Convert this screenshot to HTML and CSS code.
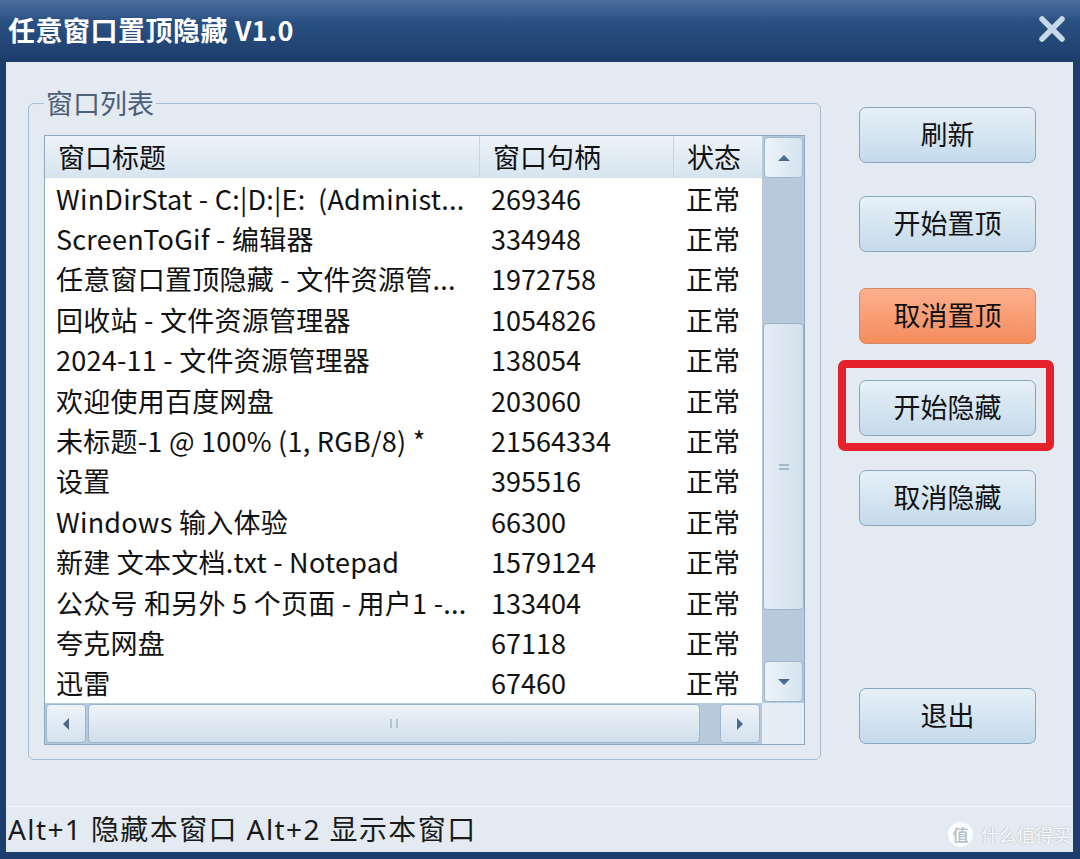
FILE: index.html
```html
<!DOCTYPE html>
<html lang="zh-CN">
<head>
    <meta charset="UTF-8">
    <title>任意窗口置顶隐藏 V1.0</title>
    <link rel="stylesheet" href="styles.css">
</head>
<body>
    <div class="window">
        <div class="titlebar">
            <span class="title">任意窗口置顶隐藏 V1.0</span>
            <svg class="close" width="26" height="26" viewBox="0 0 26 26">
                <path d="M3 3 L23 23 M23 3 L3 23" stroke="#c6d7e8" stroke-width="5.5" stroke-linecap="round"/>
            </svg>
        </div>

        <div class="client">
            <fieldset class="group">
                <legend>窗口列表</legend>
                <div class="listview">
                    <div class="lv-main">
                        <div class="lv-content">
                            <div class="lv-header">
                                <div class="c1">窗口标题</div>
                                <div class="c2">窗口句柄</div>
                                <div class="c3">状态</div>
                            </div>
                            <div class="lv-rows">
                                <div class="row"><span class="c1">WinDirStat - C:|D:|E:&nbsp; (Administ...</span><span class="c2">269346</span><span class="c3">正常</span></div>
                                <div class="row"><span class="c1">ScreenToGif - 编辑器</span><span class="c2">334948</span><span class="c3">正常</span></div>
                                <div class="row"><span class="c1">任意窗口置顶隐藏 - 文件资源管...</span><span class="c2">1972758</span><span class="c3">正常</span></div>
                                <div class="row"><span class="c1">回收站 - 文件资源管理器</span><span class="c2">1054826</span><span class="c3">正常</span></div>
                                <div class="row"><span class="c1">2024-11 - 文件资源管理器</span><span class="c2">138054</span><span class="c3">正常</span></div>
                                <div class="row"><span class="c1">欢迎使用百度网盘</span><span class="c2">203060</span><span class="c3">正常</span></div>
                                <div class="row"><span class="c1">未标题-1 @ 100% (1, RGB/8) *</span><span class="c2">21564334</span><span class="c3">正常</span></div>
                                <div class="row"><span class="c1">设置</span><span class="c2">395516</span><span class="c3">正常</span></div>
                                <div class="row"><span class="c1">Windows 输入体验</span><span class="c2">66300</span><span class="c3">正常</span></div>
                                <div class="row"><span class="c1">新建 文本文档.txt - Notepad</span><span class="c2">1579124</span><span class="c3">正常</span></div>
                                <div class="row"><span class="c1">公众号 和另外 5 个页面 - 用户1 -...</span><span class="c2">133404</span><span class="c3">正常</span></div>
                                <div class="row"><span class="c1">夸克网盘</span><span class="c2">67118</span><span class="c3">正常</span></div>
                                <div class="row"><span class="c1">迅雷</span><span class="c2">67460</span><span class="c3">正常</span></div>
                            </div>
                        </div>

                        <!-- vertical scrollbar -->
                        <div class="vscroll">
                            <div class="sb-btn">
                                <svg width="14" height="8" viewBox="0 0 14 8"><path d="M1 7 L7 1 L13 7 Z" fill="#4b6a8c"/></svg>
                            </div>
                            <div class="vtrack">
                                <div class="vthumb"><span class="grip-h"></span></div>
                            </div>
                            <div class="sb-btn">
                                <svg width="14" height="8" viewBox="0 0 14 8"><path d="M1 1 L13 1 L7 7 Z" fill="#4b6a8c"/></svg>
                            </div>
                        </div>
                    </div>

                    <div class="lv-bottom">
                        <div class="hscroll">
                            <div class="sb-btn hbtn">
                                <svg width="8" height="14" viewBox="0 0 8 14"><path d="M7 1 L7 13 L1 7 Z" fill="#4b6a8c"/></svg>
                            </div>
                            <div class="hthumb"><span class="grip-v"></span></div>
                            <div class="htrack"></div>
                            <div class="sb-btn hbtn">
                                <svg width="8" height="14" viewBox="0 0 8 14"><path d="M1 1 L7 7 L1 13 Z" fill="#4b6a8c"/></svg>
                            </div>
                        </div>
                        <div class="corner"></div>
                    </div>
                </div>
            </fieldset>

            <div class="buttons">
                <button class="btn">刷新</button>
                <button class="btn gap-a">开始置顶</button>
                <button class="btn orange gap-b">取消置顶</button>
                <button class="btn marked gap-b">开始隐藏</button>
                <button class="btn gap-c">取消隐藏</button>
                <button class="btn exit">退出</button>
            </div>
        </div>

        <div class="statusbar">Alt+1 隐藏本窗口 Alt+2 显示本窗口</div>

        <div class="watermark">
            <span class="wm-logo">值</span>
            <span class="wm-text">什么值得买</span>
        </div>
    </div>
</body>
</html>
```

FILE: styles.css
```css
/* Base */
* {
    margin: 0;
    padding: 0;
    box-sizing: border-box;
}

body {
    width: 1080px;
    height: 859px;
    overflow: hidden;
    font-family: "Noto Sans CJK SC", "Noto Sans", sans-serif;
    color: #111;
}

/* Window frame */
.window {
    position: relative;
    width: 1080px;
    height: 859px;
    display: flex;
    flex-direction: column;
    background-color: #1d3e6c;
    padding: 0 7px 7px 6px;
}

.titlebar {
    height: 62px;
    margin: 0 -7px 0 -6px;
    padding: 0 15px 0 8px;
    display: flex;
    align-items: center;
    justify-content: space-between;
    background: linear-gradient(#4b6e9d 0%, #2a5082 35%, #1c3d6b 100%);
}

.title {
    color: #fff;
    font-size: 27px;
    font-weight: bold;
    letter-spacing: 0.5px;
    margin-top: -4px;
}

.close {
    margin-top: -4px;
}

/* Client area */
.client {
    flex: 1;
    display: flex;
    padding: 23px 0 0 22px;
    background-color: #e3eaf1;
}

/* Group box */
.group {
    width: 793px;
    height: 675px;
    border: 1px solid #a8bdd1;
    border-radius: 6px;
    padding: 14px 14px 14px 15px;
    min-width: 0;
}

.group legend {
    font-size: 27px;
    line-height: 36px;
    padding: 0 2px;
    color: #4d5f79;
}

/* List view */
.listview {
    width: 761px;
    height: 610px;
    border: 1px solid #8ea8c1;
    display: flex;
    flex-direction: column;
    background-color: #fff;
}

.lv-main {
    height: 567px;
    display: flex;
}

.lv-content {
    width: 717px;
    display: flex;
    flex-direction: column;
}

.lv-header {
    height: 42px;
    display: flex;
    background: linear-gradient(#edf3f9, #d7e4ef);
    border-bottom: 1px solid #d0dce7;
    font-size: 27px;
    line-height: 41px;
}

.lv-header div {
    padding-left: 13px;
    white-space: nowrap;
}

.lv-header .c1,
.lv-header .c2 {
    border-right: 1px solid #c6d5e3;
}

.c1 {
    width: 435px;
}

.c2 {
    width: 194px;
}

.c3 {
    flex: 1;
}

.lv-rows {
    flex: 1;
    display: grid;
    grid-template-rows: repeat(13, 1fr);
    font-size: 27px;
}

.row {
    display: flex;
    align-items: center;
    white-space: nowrap;
}

.row span {
    overflow: hidden;
    padding-left: 11px;
}

.row .c1 {
    letter-spacing: 0.25px;
}

.row .c3 {
    padding-left: 12px;
}

/* Scrollbars */
.vscroll {
    width: 42px;
    display: flex;
    flex-direction: column;
    padding: 1px 1px 1px 2px;
    background-color: #b6cadc;
}

.sb-btn {
    height: 41px;
    display: flex;
    align-items: center;
    justify-content: center;
    border: 1px solid #9fb7cd;
    border-radius: 4px;
    background: linear-gradient(90deg, #edf3f9, #d5e3ef);
}

.vtrack {
    flex: 1;
}

.vthumb {
    height: 287px;
    margin: 145px -1px 0 -1px;
    display: flex;
    align-items: center;
    justify-content: center;
    border: 1px solid #9cb4ca;
    border-radius: 4px;
    background: linear-gradient(90deg, #e4edf5, #d2e0ec);
}

.grip-h {
    width: 10px;
    height: 6px;
    border-top: 2px solid #a3b8cb;
    border-bottom: 2px solid #a3b8cb;
}

.lv-bottom {
    height: 41px;
    display: flex;
}

.hscroll {
    width: 717px;
    display: flex;
    padding: 1px 2px 1px 1px;
    background-color: #b6cadc;
}

.hbtn {
    width: 40px;
    height: auto;
    background: linear-gradient(#edf3f9, #d5e3ef);
}

.hthumb {
    width: 612px;
    margin-left: 2px;
    display: flex;
    align-items: center;
    justify-content: center;
    border: 1px solid #9cb4ca;
    border-radius: 4px;
    background: linear-gradient(#eef4f9, #cfdeeb);
}

.grip-v {
    width: 8px;
    height: 9px;
    border-left: 2px solid #b3c5d5;
    border-right: 2px solid #b3c5d5;
}

.htrack {
    flex: 1;
}

.corner {
    flex: 1;
    background-color: #e6eef5;
}

/* Buttons */
.buttons {
    width: 177px;
    margin-left: 38px;
    padding-top: 22px;
    padding-bottom: 62px;
    display: flex;
    flex-direction: column;
}

.btn {
    position: relative;
    height: 56px;
    padding-bottom: 4px;
    font-family: inherit;
    font-size: 27px;
    color: #111;
    border: 1px solid #86a6c0;
    border-radius: 7px;
    background: linear-gradient(#e6f0f8, #c4daeb);
}

.btn.orange {
    border-color: #d58a66;
    background: linear-gradient(#fdb08e, #f48c5c);
}

.gap-a {
    margin-top: 33px;
}

.gap-b {
    margin-top: 36px;
}

.gap-c {
    margin-top: 34px;
}

.exit {
    margin-top: auto;
}

/* Red highlight round the hide button */
.btn.marked::after {
    content: "";
    position: absolute;
    top: -21px;
    left: -22px;
    right: -19px;
    bottom: -16px;
    border: 8px solid #e5212b;
    border-radius: 7px;
}

/* Status bar */
.statusbar {
    height: 46px;
    padding-left: 2px;
    border-top: 1px solid #f2f6f9;
    background-color: #e3eaf1;
    font-family: "Noto Sans", "Noto Sans CJK SC", sans-serif;
    font-size: 28px;
    letter-spacing: 1.4px;
    line-height: 44px;
    color: #1a1a1a;
    white-space: nowrap;
}

/* Watermark */
.watermark {
    position: absolute;
    right: 9px;
    bottom: 12px;
    display: flex;
    align-items: center;
    gap: 8px;
    color: rgba(255, 255, 255, 0.9);
    text-shadow: 0 0 2px rgba(0, 0, 0, 0.25);
}

.wm-logo {
    width: 25px;
    height: 25px;
    border-radius: 50%;
    background-color: rgba(255, 255, 255, 0.9);
    color: #b8c4cf;
    font-size: 16px;
    line-height: 25px;
    text-align: center;
    text-shadow: none;
    font-weight: bold;
}

.wm-text {
    font-size: 18px;
}
```
